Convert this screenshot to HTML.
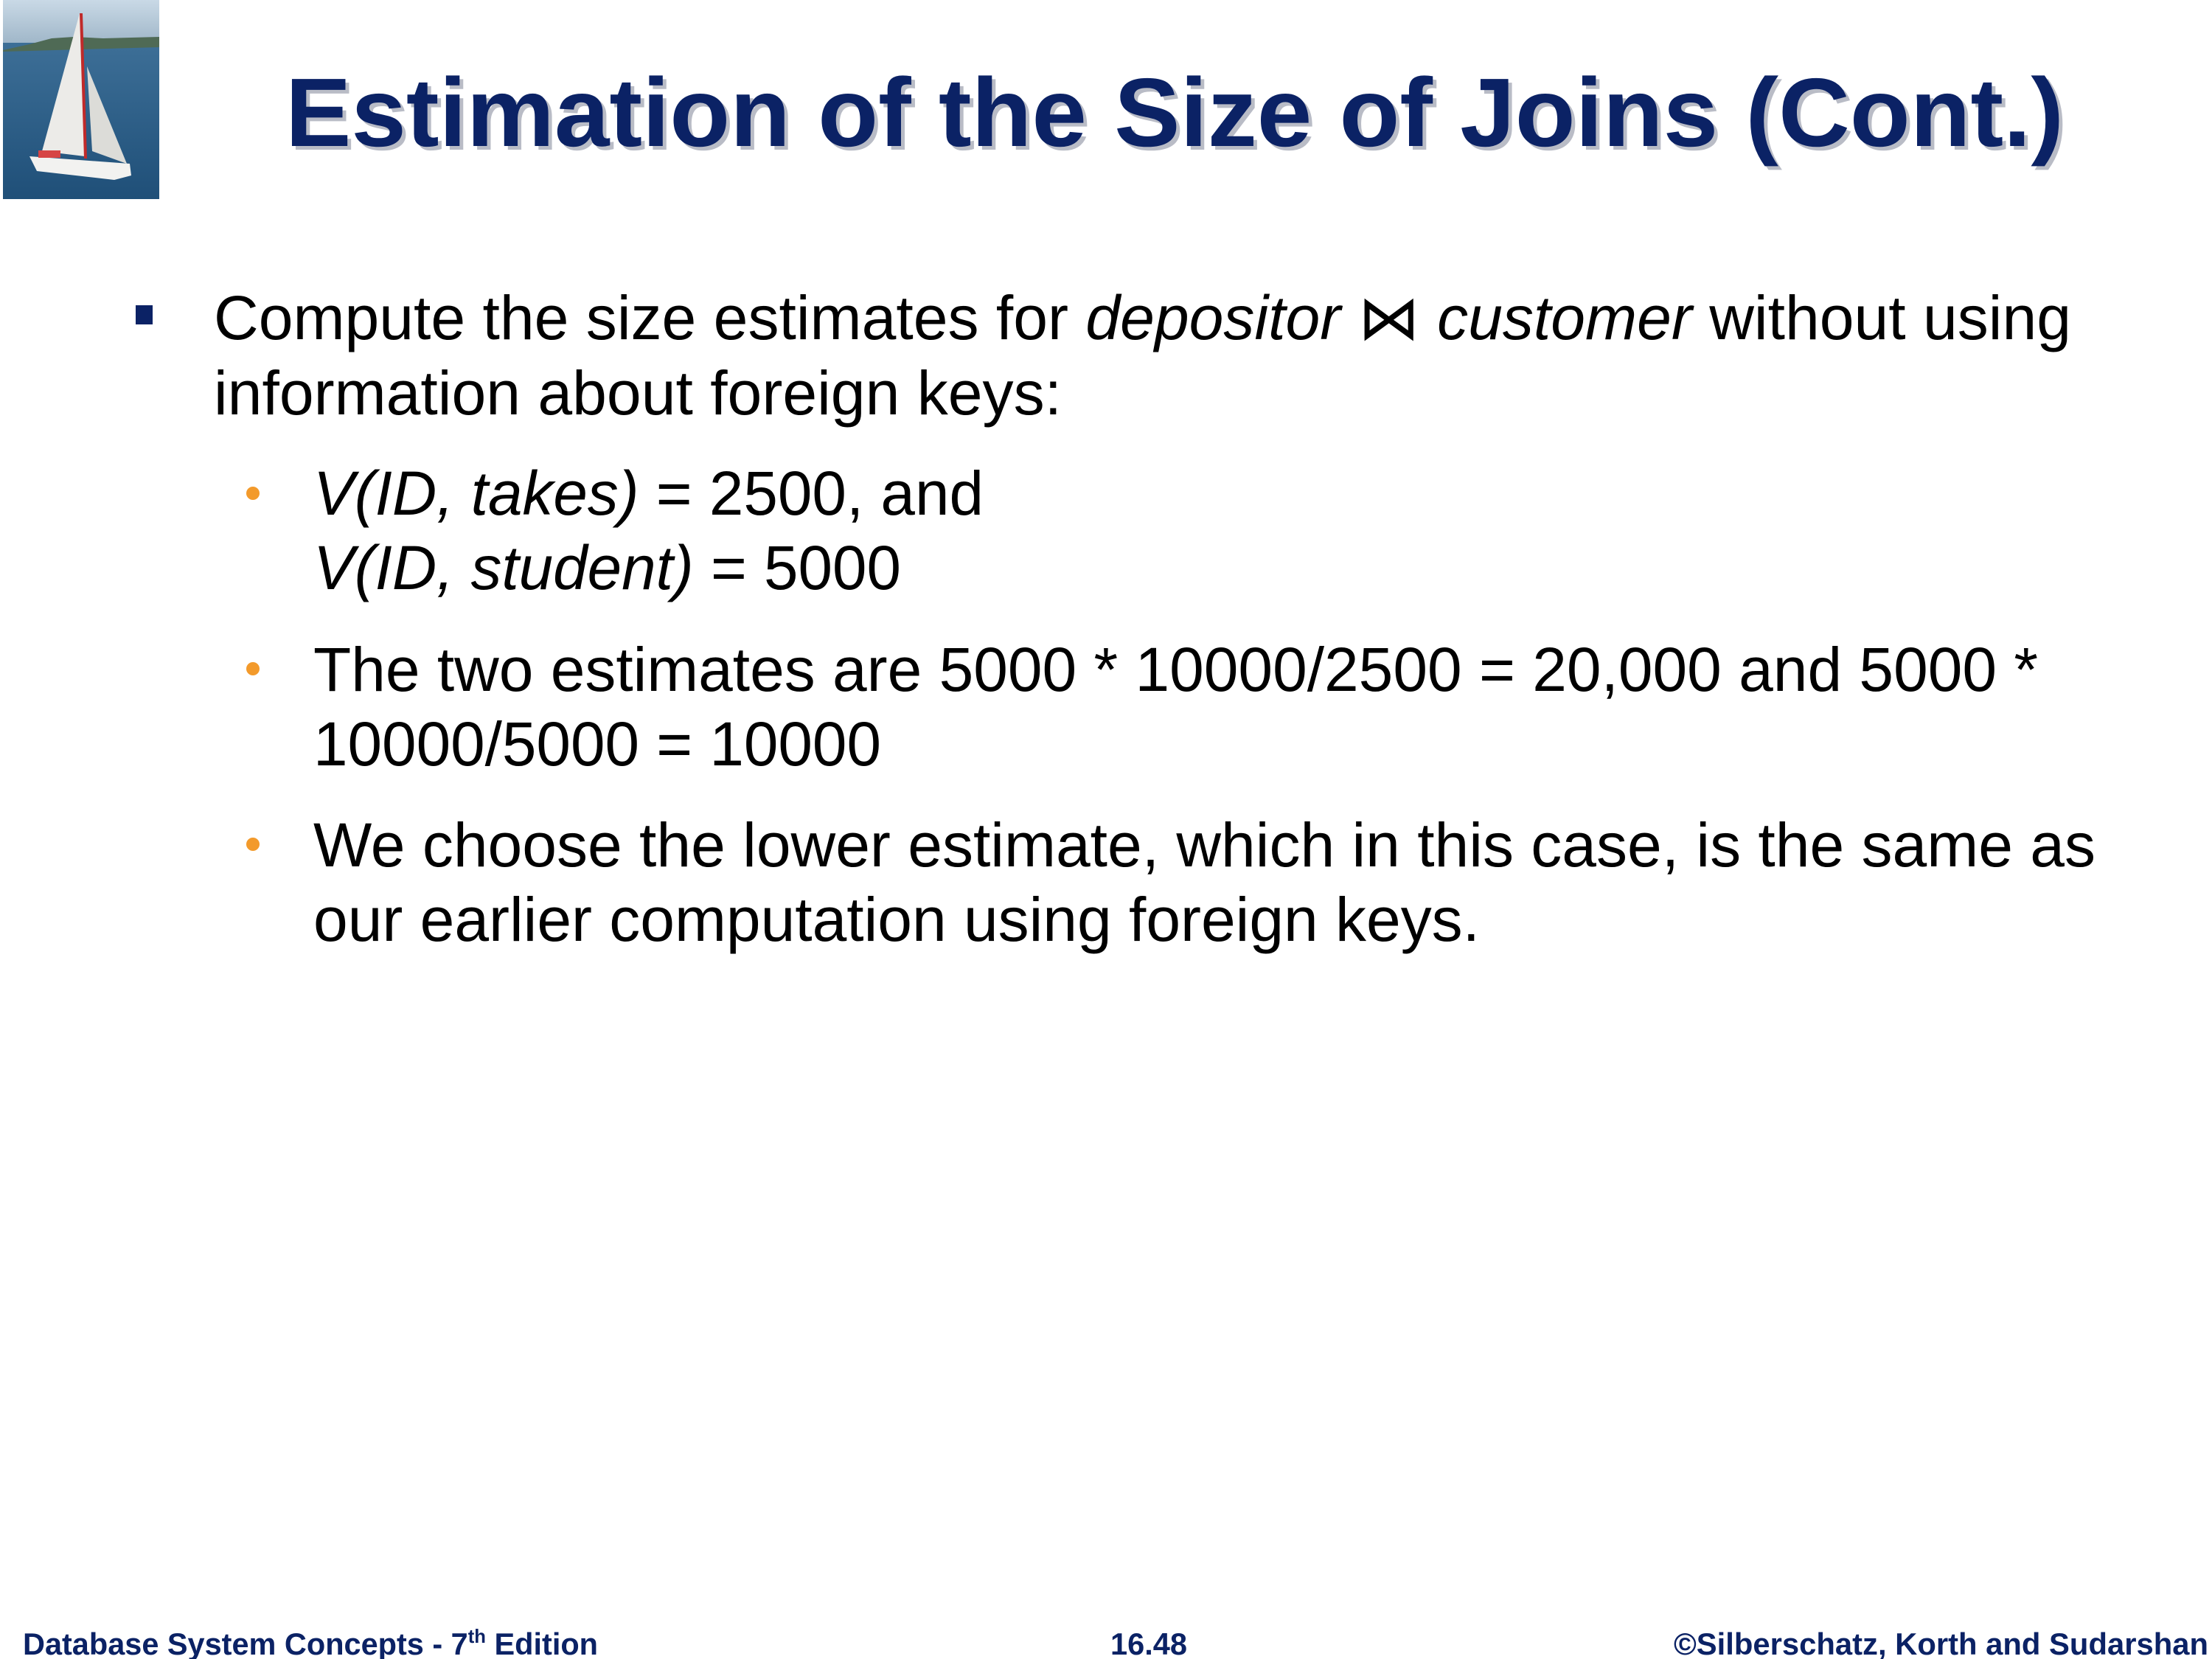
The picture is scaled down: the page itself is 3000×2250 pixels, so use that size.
<!DOCTYPE html>
<html><head><meta charset="utf-8"><style>
html,body{margin:0;padding:0;background:#fff}
svg{display:block}
text{font-family:"Liberation Sans","DejaVu Sans",sans-serif}
</style></head><body>
<svg width="3000" height="2250" viewBox="0 0 3000 2250" xmlns="http://www.w3.org/2000/svg">
<defs>
<linearGradient id="sky" x1="0" y1="0" x2="0" y2="1"><stop offset="0" stop-color="#c9d9e6"/><stop offset="1" stop-color="#9fb6c8"/></linearGradient>
<linearGradient id="sea" x1="0" y1="0" x2="0" y2="1"><stop offset="0" stop-color="#3d6f97"/><stop offset="1" stop-color="#1f4f78"/></linearGradient>
</defs>
<rect width="3000" height="2250" fill="#fff"/>
<!-- sailboat image -->
<rect x="4" y="0" width="212" height="60" fill="url(#sky)"/>
<rect x="4" y="58" width="212" height="212" fill="url(#sea)"/>
<path d="M4 68 L40 60 L70 52 L100 50 L140 52 L216 50 L216 64 L4 70 Z" fill="#4f6a55"/>
<polygon points="108,18 57,205 115,212" fill="#ecebe8"/>
<polygon points="118,90 125,205 172,222" fill="#dcdcd8"/>
<line x1="110" y1="18" x2="116" y2="215" stroke="#c02a2a" stroke-width="4"/>
<path d="M40 212 L176 222 L178 238 L155 244 L50 232 Z" fill="#f2f2f0"/>
<rect x="52" y="204" width="30" height="10" fill="#d64545"/>
<!-- title -->
<text x="392" y="203" font-size="132" font-weight="bold" fill="#b9bcc6" textLength="2412" lengthAdjust="spacingAndGlyphs">Estimation of the Size of Joins (Cont.)</text>
<text x="387" y="198" font-size="132" font-weight="bold" fill="#0b2265" textLength="2412" lengthAdjust="spacingAndGlyphs">Estimation of the Size of Joins (Cont.)</text>
<!-- bullets -->
<rect x="184" y="414" width="23" height="26" fill="#0b2265"/>
<g font-size="84" fill="#000">
<text x="290" y="460" textLength="2519" lengthAdjust="spacingAndGlyphs">Compute the size estimates for <tspan font-style="italic">depositor</tspan> <tspan font-family="DejaVu Sans">⋈</tspan> <tspan font-style="italic">customer</tspan> without using</text>
<text x="290" y="562" textLength="1150" lengthAdjust="spacingAndGlyphs">information about foreign keys:</text>
<text x="425" y="698" textLength="909" lengthAdjust="spacingAndGlyphs"><tspan font-style="italic">V(ID, takes)</tspan> = 2500, and</text>
<text x="425" y="799" textLength="797" lengthAdjust="spacingAndGlyphs"><tspan font-style="italic">V(ID, student)</tspan> = 5000</text>
<text x="425" y="937" textLength="2339" lengthAdjust="spacingAndGlyphs">The two estimates are 5000 * 10000/2500 = 20,000 and 5000 *</text>
<text x="425" y="1038" textLength="770" lengthAdjust="spacingAndGlyphs">10000/5000 = 10000</text>
<text x="425" y="1175" textLength="2417" lengthAdjust="spacingAndGlyphs">We choose the lower estimate, which in this case, is the same as</text>
<text x="425" y="1276" textLength="1582" lengthAdjust="spacingAndGlyphs">our earlier computation using foreign keys.</text>
</g>
<circle cx="343" cy="669" r="9" fill="#f39a2b"/>
<circle cx="343" cy="907" r="9" fill="#f39a2b"/>
<circle cx="343" cy="1145" r="9" fill="#f39a2b"/>
<!-- footer -->
<g font-size="42" font-weight="bold" fill="#0b2265">
<text x="31" y="2244" textLength="780" lengthAdjust="spacingAndGlyphs">Database System Concepts - 7<tspan font-size="26" dy="-16">th</tspan><tspan dy="16"> Edition</tspan></text>
<text x="1506" y="2244" textLength="104" lengthAdjust="spacingAndGlyphs">16.48</text>
<text x="2270" y="2244" textLength="725" lengthAdjust="spacingAndGlyphs">©Silberschatz, Korth and Sudarshan</text>
</g>
</svg>
</body></html>
